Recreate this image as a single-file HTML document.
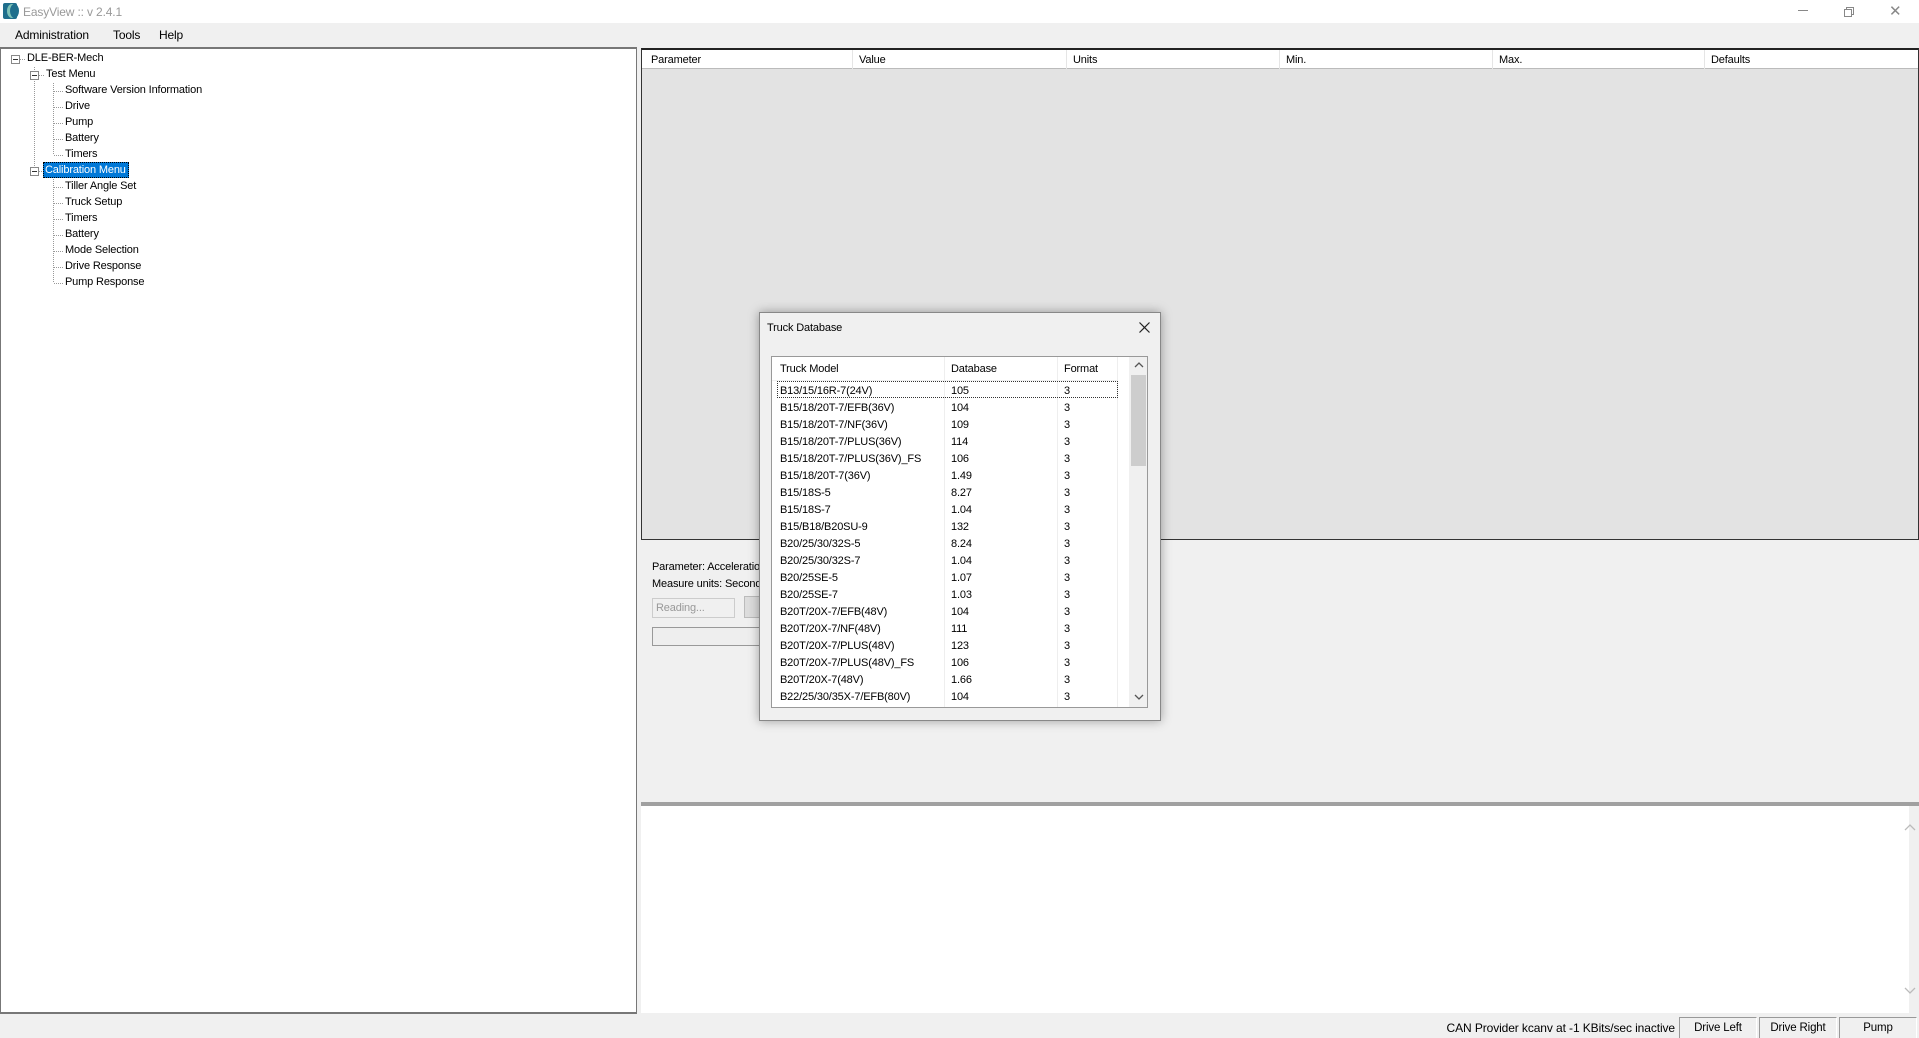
<!DOCTYPE html>
<html><head><meta charset="utf-8"><style>
*{margin:0;padding:0;box-sizing:border-box}
body{width:1919px;height:1038px;background:#f0f0f0;font-family:"Liberation Sans",Arial,sans-serif;font-size:11px;letter-spacing:-0.15px;color:#000;position:relative;overflow:hidden}
.a{position:absolute;white-space:nowrap}
</style></head><body>
<!-- title bar -->
<div class="a" style="left:0;top:0;width:1919px;height:23px;background:#fff"></div>
<div class="a" style="left:3px;top:3px;width:14px;height:16px;background:#1f6e8c;border-radius:2px"></div>
<div class="a" style="left:7px;top:4px;width:10px;height:14px;border-radius:50%;background:#7fc3b8"></div>
<div class="a" style="left:10px;top:4px;width:9px;height:14px;border-radius:50%;background:#1f6e8c"></div>
<div class="a" style="left:23px;top:5px;color:#999;font-size:12px">EasyView :: v 2.4.1</div>
<div class="a" style="left:1798px;top:10px;width:10px;height:1px;background:#888"></div>
<div class="a" style="left:1846px;top:7px;width:8px;height:8px;border:1px solid #888"></div>
<div class="a" style="left:1844px;top:9px;width:8px;height:8px;border:1px solid #888;background:#fff"></div>
<div class="a" style="left:1889px;top:2px;color:#888;font-size:15px">✕</div>
<!-- menu -->
<div class="a" style="left:15px;top:28px;font-size:12px">Administration</div>
<div class="a" style="left:113px;top:28px;font-size:12px">Tools</div>
<div class="a" style="left:159px;top:28px;font-size:12px">Help</div>
<!-- left tree panel -->
<div class="a" style="left:0;top:47px;width:637px;height:967px;background:#fff;border:1px solid #777;border-top:2px solid #777;border-bottom:2px solid #777"></div>
<svg class="a" style="left:0;top:49px" width="200" height="250">
<g stroke="#999" stroke-dasharray="1,1" fill="none">
<line x1="34.5" y1="18" x2="34.5" y2="122"/>
<line x1="53.5" y1="34" x2="53.5" y2="106"/>
<line x1="53.5" y1="130" x2="53.5" y2="234"/>
<line x1="20" y1="10.5" x2="26" y2="10.5"/>
<line x1="39" y1="26.5" x2="45" y2="26.5"/>
<line x1="39" y1="122.5" x2="45" y2="122.5"/>
<line x1="54" y1="42.5" x2="63" y2="42.5"/><line x1="54" y1="58.5" x2="63" y2="58.5"/><line x1="54" y1="74.5" x2="63" y2="74.5"/><line x1="54" y1="90.5" x2="63" y2="90.5"/><line x1="54" y1="106.5" x2="63" y2="106.5"/>
<line x1="54" y1="138.5" x2="63" y2="138.5"/><line x1="54" y1="154.5" x2="63" y2="154.5"/><line x1="54" y1="170.5" x2="63" y2="170.5"/><line x1="54" y1="186.5" x2="63" y2="186.5"/><line x1="54" y1="202.5" x2="63" y2="202.5"/><line x1="54" y1="218.5" x2="63" y2="218.5"/><line x1="54" y1="234.5" x2="63" y2="234.5"/>
</g>
<g stroke="#888" fill="#fff"><rect x="11.5" y="6.5" width="8" height="8"/><rect x="30.5" y="22.5" width="8" height="8"/><rect x="30.5" y="118.5" width="8" height="8"/></g>
<g stroke="#333"><line x1="13" y1="10.5" x2="18" y2="10.5"/><line x1="32" y1="26.5" x2="37" y2="26.5"/><line x1="32" y1="122.5" x2="37" y2="122.5"/></g>
</svg>
<div class="a" style="left:27px;top:52px">DLE-BER-Mech</div>
<div class="a" style="left:46px;top:68px">Test Menu</div>
<div class="a" style="left:65px;top:84px">Software Version Information</div>
<div class="a" style="left:65px;top:100px">Drive</div>
<div class="a" style="left:65px;top:116px">Pump</div>
<div class="a" style="left:65px;top:132px">Battery</div>
<div class="a" style="left:65px;top:148px">Timers</div>
<div class="a" style="left:43px;top:162px;width:86px;height:16px;background:#0078d7;border:1px dotted #000"></div>
<div class="a" style="left:45px;top:164px;color:#fff">Calibration Menu</div>
<div class="a" style="left:65px;top:180px">Tiller Angle Set</div>
<div class="a" style="left:65px;top:196px">Truck Setup</div>
<div class="a" style="left:65px;top:212px">Timers</div>
<div class="a" style="left:65px;top:228px">Battery</div>
<div class="a" style="left:65px;top:244px">Mode Selection</div>
<div class="a" style="left:65px;top:260px">Drive Response</div>
<div class="a" style="left:65px;top:276px">Pump Response</div>
<!-- right grid -->
<div class="a" style="left:641px;top:48px;width:1278px;height:492px;background:#e3e3e3;border:1px solid #333;border-top:2px solid #222"></div>
<div class="a" style="left:642px;top:50px;width:1276px;height:19px;background:#fff;border-bottom:1px solid #bbb"></div>
<div class="a" style="left:852px;top:50px;width:1px;height:19px;background:#e5e5e5"></div>
<div class="a" style="left:1066px;top:50px;width:1px;height:19px;background:#e5e5e5"></div>
<div class="a" style="left:1279px;top:50px;width:1px;height:19px;background:#e5e5e5"></div>
<div class="a" style="left:1492px;top:50px;width:1px;height:19px;background:#e5e5e5"></div>
<div class="a" style="left:1704px;top:50px;width:1px;height:19px;background:#e5e5e5"></div>
<div class="a" style="left:651px;top:54px">Parameter</div>
<div class="a" style="left:859px;top:54px">Value</div>
<div class="a" style="left:1073px;top:54px">Units</div>
<div class="a" style="left:1286px;top:54px">Min.</div>
<div class="a" style="left:1499px;top:54px">Max.</div>
<div class="a" style="left:1711px;top:54px">Defaults</div>
<!-- lower panel -->
<div class="a" style="left:652px;top:561px">Parameter: Acceleration</div>
<div class="a" style="left:652px;top:578px">Measure units: Seconds</div>
<div class="a" style="left:652px;top:598px;width:83px;height:20px;background:#f0f0f0;border:1px solid #ccc;color:#999;padding:3px 3px">Reading...</div>
<div class="a" style="left:744px;top:596px;width:40px;height:22px;background:#ddd;border:1px solid #bbb"></div>
<div class="a" style="left:652px;top:627px;width:120px;height:19px;border:1px solid #999;background:#eee"></div>
<div class="a" style="left:641px;top:802px;width:1278px;height:4px;background:#a0a0a0"></div>
<div class="a" style="left:641px;top:806px;width:1268px;height:207px;background:#fff"></div>
<svg class="a" style="left:1903px;top:822px" width="14" height="190"><g stroke="#bbb" fill="none" stroke-width="1.3"><polyline points="2,8 7,3 12,8"/><polyline points="2,166 7,171 12,166"/></g></svg>
<div class="a" style="left:1400px;top:1021px;font-size:12px;letter-spacing:-0.1px;width:275px;text-align:right">CAN Provider kcanv at -1 KBits/sec inactive</div>
<div class="a" style="left:1679px;top:1017px;width:78px;height:21px;border:1px solid #999;border-right-color:#fff;border-bottom:none;text-align:center;padding-top:4px;font-size:11.5px">Drive Left</div>
<div class="a" style="left:1759px;top:1017px;width:78px;height:21px;border:1px solid #999;border-right-color:#fff;border-bottom:none;text-align:center;padding-top:4px;font-size:11.5px">Drive Right</div>
<div class="a" style="left:1839px;top:1017px;width:78px;height:21px;border:1px solid #999;border-right-color:#fff;border-bottom:none;text-align:center;padding-top:4px;font-size:11.5px">Pump</div>
<!-- dialog -->
<div class="a" style="left:759px;top:312px;width:402px;height:409px;background:#f0f0f0;border:1px solid #888;box-shadow:0 0 10px rgba(0,0,0,.35)"></div>
<div class="a" style="left:767px;top:322px">Truck Database</div>
<svg class="a" style="left:1139px;top:322px" width="11" height="11"><g stroke="#222" stroke-width="1.2"><line x1="0.5" y1="0.5" x2="10.5" y2="10.5"/><line x1="10.5" y1="0.5" x2="0.5" y2="10.5"/></g></svg>
<div class="a" style="left:771px;top:356px;width:377px;height:352px;background:#fff;border:1px solid #999;overflow:hidden">
<div style="position:absolute;left:0;top:0;width:345px;height:24px;border-bottom:1px solid #f0f0f0"></div>
<div style="position:absolute;left:172px;top:0;width:1px;height:352px;background:#eee"></div>
<div style="position:absolute;left:285px;top:0;width:1px;height:352px;background:#eee"></div>
<div style="position:absolute;left:345px;top:0;width:1px;height:352px;background:#eee"></div>
<div style="position:absolute;left:8px;top:6px">Truck Model</div>
<div style="position:absolute;left:179px;top:6px">Database</div>
<div style="position:absolute;left:292px;top:6px">Format</div>
<div style="position:absolute;left:5px;top:24px;width:341px;height:17px;border:1px dotted #333"></div>
<div style="position:absolute;left:357px;top:0;width:19px;height:352px;background:#f0f0f0"></div>
<div style="position:absolute;left:359px;top:18px;width:15px;height:91px;background:#cdcdcd"></div>
<svg style="position:absolute;left:362px;top:4px" width="10" height="345"><g stroke="#555" fill="none" stroke-width="1.3"><polyline points="1,6 5,2 9,6"/><polyline points="1,334 5,338 9,334"/></g></svg>
<div style="position:absolute;left:8px;top:26px;line-height:17px">B13/15/16R-7(24V)<br>B15/18/20T-7/EFB(36V)<br>B15/18/20T-7/NF(36V)<br>B15/18/20T-7/PLUS(36V)<br>B15/18/20T-7/PLUS(36V)_FS<br>B15/18/20T-7(36V)<br>B15/18S-5<br>B15/18S-7<br>B15/B18/B20SU-9<br>B20/25/30/32S-5<br>B20/25/30/32S-7<br>B20/25SE-5<br>B20/25SE-7<br>B20T/20X-7/EFB(48V)<br>B20T/20X-7/NF(48V)<br>B20T/20X-7/PLUS(48V)<br>B20T/20X-7/PLUS(48V)_FS<br>B20T/20X-7(48V)<br>B22/25/30/35X-7/EFB(80V)</div>
<div style="position:absolute;left:179px;top:26px;line-height:17px">105<br>104<br>109<br>114<br>106<br>1.49<br>8.27<br>1.04<br>132<br>8.24<br>1.04<br>1.07<br>1.03<br>104<br>111<br>123<br>106<br>1.66<br>104</div>
<div style="position:absolute;left:292px;top:26px;line-height:17px">3<br>3<br>3<br>3<br>3<br>3<br>3<br>3<br>3<br>3<br>3<br>3<br>3<br>3<br>3<br>3<br>3<br>3<br>3</div>
</div>
</body></html>
